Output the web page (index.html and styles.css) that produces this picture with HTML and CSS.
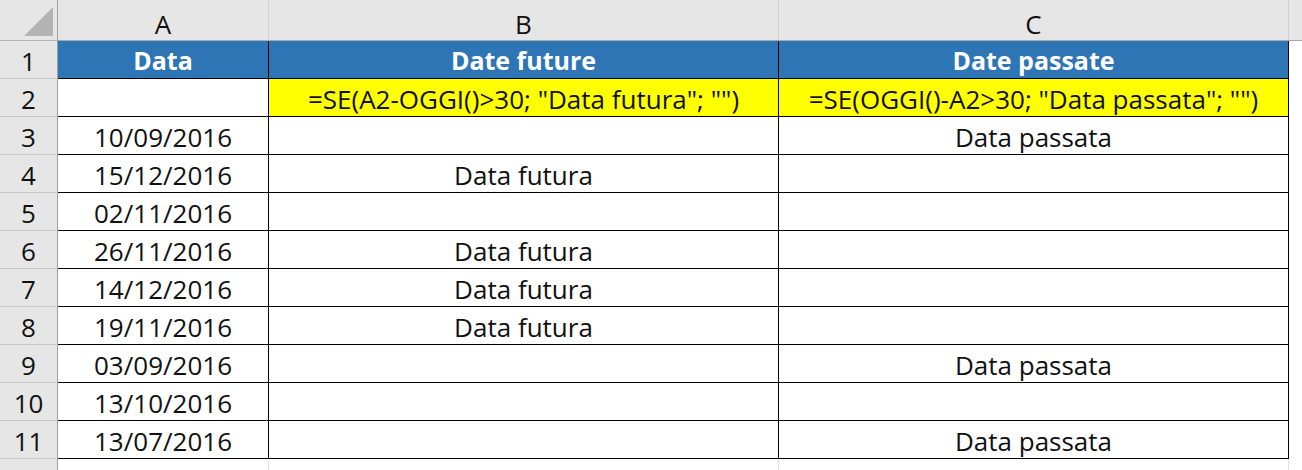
FILE: index.html
```html
<!DOCTYPE html>
<html lang="it">
<head>
<meta charset="utf-8">
<title>Date future e passate</title>
<link rel="stylesheet" href="styles.css">
</head>
<body>
<div class="sheet">
  <div class="corner"><div class="tri"></div></div>
  <div class="ch">A</div>
  <div class="ch">B</div>
  <div class="ch">C</div>
  <div class="ch ch-last"></div>

  <div class="rh">1</div>
  <div class="c hd">Data</div>
  <div class="c hd">Date future</div>
  <div class="c hd">Date passate</div>
  <div class="x"></div>

  <div class="rh">2</div>
  <div class="c"></div>
  <div class="c yl">=SE(A2-OGGI()&gt;30; "Data futura"; "")</div>
  <div class="c yl">=SE(OGGI()-A2&gt;30; "Data passata"; "")</div>
  <div class="x"></div>

  <div class="rh">3</div>
  <div class="c">10/09/2016</div>
  <div class="c"></div>
  <div class="c">Data passata</div>
  <div class="x"></div>

  <div class="rh">4</div>
  <div class="c">15/12/2016</div>
  <div class="c">Data futura</div>
  <div class="c"></div>
  <div class="x"></div>

  <div class="rh">5</div>
  <div class="c">02/11/2016</div>
  <div class="c"></div>
  <div class="c"></div>
  <div class="x"></div>

  <div class="rh">6</div>
  <div class="c">26/11/2016</div>
  <div class="c">Data futura</div>
  <div class="c"></div>
  <div class="x"></div>

  <div class="rh">7</div>
  <div class="c">14/12/2016</div>
  <div class="c">Data futura</div>
  <div class="c"></div>
  <div class="x"></div>

  <div class="rh">8</div>
  <div class="c">19/11/2016</div>
  <div class="c">Data futura</div>
  <div class="c"></div>
  <div class="x"></div>

  <div class="rh">9</div>
  <div class="c">03/09/2016</div>
  <div class="c"></div>
  <div class="c">Data passata</div>
  <div class="x"></div>

  <div class="rh">10</div>
  <div class="c">13/10/2016</div>
  <div class="c"></div>
  <div class="c"></div>
  <div class="x"></div>

  <div class="rh">11</div>
  <div class="c">13/07/2016</div>
  <div class="c"></div>
  <div class="c">Data passata</div>
  <div class="x"></div>

  <div class="rh rh-cut"></div>
  <div class="e"></div>
  <div class="e"></div>
  <div class="e"></div>
  <div class="x"></div>
</div>
</body>
</html>
```

FILE: styles.css
```css
html, body {
  margin: 0;
  padding: 0;
  background: #ffffff;
}
body {
  width: 1302px;
  height: 470px;
  overflow: hidden;
  font-family: "Open Sans", "Liberation Sans", sans-serif;
  font-size: 26px;
  color: #111;
}
.sheet {
  display: grid;
  grid-template-columns: 58px 211px 510px 510px 13px;
  grid-template-rows: 41px repeat(11, 38px) 11px;
}
.sheet > div {
  box-sizing: border-box;
  display: flex;
  align-items: center;
  justify-content: center;
  white-space: nowrap;
  overflow: hidden;
}
.corner {
  background: #e6e6e6;
  border-right: 1px solid #9e9e9e;
  border-bottom: 1px solid #b4b4b4;
  position: relative;
}
.tri {
  position: absolute;
  right: 4px;
  bottom: 4px;
  width: 0;
  height: 0;
  border-left: 29px solid transparent;
  border-bottom: 29px solid #b3b3b3;
}
.ch {
  background: #e6e6e6;
  border-right: 1px solid #cfcfcf;
  border-bottom: 1px solid #a8a8a8;
  padding-top: 8px;
}
.ch-last {
  border-right: none;
}
.rh {
  background: #e6e6e6;
  border-right: 1px solid #9e9e9e;
  border-bottom: 1px solid #c8c8c8;
  padding-top: 2px;
}
.rh-cut {
  border-bottom: none;
}
.c {
  border-right: 1px solid #000;
  border-bottom: 1px solid #000;
  padding-top: 2px;
}
.hd {
  background: #2e75b6;
  color: #ffffff;
  font-weight: 700;
  font-size: 25px;
  padding-top: 0;
}
.yl {
  background: #ffff00;
}
.e {
  border-right: 1px solid #e0e0e0;
}
.x {
  background: #ffffff;
}
```
